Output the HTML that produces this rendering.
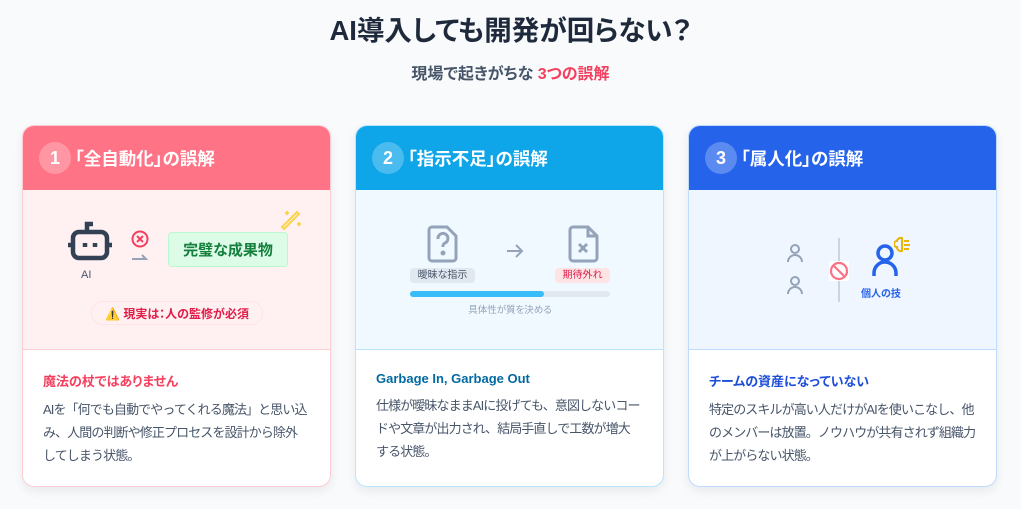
<!DOCTYPE html>
<html><head><meta charset="utf-8"><style>
*{box-sizing:border-box;margin:0;padding:0}
body{width:1021px;height:509px;background:#f8fafc;font-family:"Liberation Sans","Noto Sans CJK JP",sans-serif;position:relative;overflow:hidden;color:#1e293b;font-feature-settings:"palt"}
h1{position:absolute;top:8px;left:0;width:1021px;text-align:center;font-size:27.5px;font-weight:700;color:#1e293b}
.sub{position:absolute;top:60px;left:0;width:1021px;text-align:center;font-size:16px;font-weight:700;color:#475569}
.sub span{color:#f43f5e}
.card{position:absolute;top:125px;width:309px;height:362px;border-radius:12px;background:#fff;overflow:hidden;box-shadow:0 4px 10px rgba(15,23,42,.07)}
.hd{height:64px;display:flex;align-items:center;padding-left:16px;color:#fff;font-size:17.5px;font-weight:700}
.num{width:32px;height:32px;border-radius:50%;background:rgba(255,255,255,.25);display:flex;align-items:center;justify-content:center;font-size:18px;margin-right:4px}
.il{height:160px;position:relative}
.bt{padding:21px 0 0 20px}
.bt h3{font-size:13px;font-weight:700;margin-bottom:8px}
.bt p{font-size:13px;line-height:23px;color:#475569;white-space:nowrap;letter-spacing:-0.9px;font-feature-settings:normal}
.abs{position:absolute}
</style></head><body>
<h1>AI導入しても開発が回らない？</h1>
<div class="sub">現場で起きがちな <span>3つの誤解</span></div>

<div class="card" style="left:22px;border:1px solid #fecdd3">
<div class="hd" style="background:#ff7386"><div class="num">1</div>「全自動化」の誤解</div>
<div class="il" style="background:#fff1f2;border-bottom:1px solid #fecdd3">
<svg class="abs" style="left:42px;top:28px" width="50" height="50" viewBox="0 0 50 50" fill="none" stroke="#334155" stroke-width="4.5"><path d="M22 14V6h6"/><rect x="8" y="14" width="34" height="26" rx="6"/><path d="M3 27h5M42 27h5"/><path d="M20 25v4M30 25v4"/></svg>
<div class="abs" style="left:58px;top:79px;font-size:11px;color:#475569">AI</div>
<svg class="abs" style="left:106px;top:40px" width="22" height="36" viewBox="0 0 22 36" fill="none"><circle cx="11" cy="9" r="7.5" stroke="#f43f5e" stroke-width="2"/><path d="M8 6l6 6M14 6l-6 6" stroke="#f43f5e" stroke-width="2"/><path d="M3 29h14l-4-4" stroke="#94a3b8" stroke-width="2"/></svg>
<div class="abs" style="left:145px;top:42px;width:120px;height:35px;background:#dcfce7;border:1px solid #bbf7d0;border-radius:4px;color:#15803d;font-size:15px;font-weight:700;display:flex;align-items:center;justify-content:center">完璧な成果物</div>
<svg class="abs" style="left:257px;top:18px" width="24" height="24" viewBox="0 0 24 24" fill="none" stroke="#fcd34d" stroke-width="2"><path d="M4 21L19 6l-2-2L2 19z"/><path d="M7 3v4M5 5h4M19 14v4M17 16h4"/></svg>
<div class="abs" style="left:68px;top:111px;width:172px;height:24px;border:1px solid #ffe4e6;border-radius:12px;background:#fff1f2;font-size:12px;color:#e11d48;font-weight:700;display:flex;align-items:center;justify-content:center">⚠️ 現実は：人の監修が必須</div>
</div>
<div class="bt"><h3 style="color:#f43f5e">魔法の杖ではありません</h3><p>AIを「何でも自動でやってくれる魔法」と思い込<br>み、人間の判断や修正プロセスを設計から除外<br>してしまう状態。</p></div>
</div>

<div class="card" style="left:355px;border:1px solid #bae6fd">
<div class="hd" style="background:#0ea5e9"><div class="num">2</div>「指示不足」の誤解</div>
<div class="il" style="background:#f0f9ff;border-bottom:1px solid #bae6fd">
<svg class="abs" style="left:70px;top:34px" width="34" height="40" viewBox="0 0 34 40" fill="none" stroke="#94a3b8" stroke-width="3"><path d="M6 3h15l9 9v22a3 3 0 0 1-3 3H6a3 3 0 0 1-3-3V6a3 3 0 0 1 3-3z"/><path d="M12 15a5 5 0 1 1 7 4c-2 1-2 2-2 4"/><circle cx="17" cy="29" r="1" fill="#94a3b8"/></svg>
<svg class="abs" style="left:150px;top:53px" width="18" height="16" viewBox="0 0 18 16" fill="none" stroke="#94a3b8" stroke-width="2"><path d="M1 8h15M10 2l6 6-6 6"/></svg>
<svg class="abs" style="left:211px;top:34px" width="34" height="40" viewBox="0 0 34 40" fill="none" stroke="#94a3b8" stroke-width="3"><path d="M6 3h15l9 9v22a3 3 0 0 1-3 3H6a3 3 0 0 1-3-3V6a3 3 0 0 1 3-3z"/><path d="M21 3v9h9"/><path d="M12 20l8 8M20 20l-8 8"/></svg>
<div class="abs" style="left:54px;top:78px;width:65px;height:15px;background:#e2e8f0;border-radius:4px;font-size:10px;color:#475569;text-align:center;line-height:15px">曖昧な指示</div>
<div class="abs" style="left:199px;top:78px;width:55px;height:15px;background:#ffe4e6;border-radius:4px;font-size:10px;color:#e11d48;text-align:center;line-height:15px">期待外れ</div>
<div class="abs" style="left:54px;top:101px;width:200px;height:6px;background:#e2e8f0;border-radius:3px"><div style="width:134px;height:6px;background:#38bdf8;border-radius:3px"></div></div>
<div class="abs" style="left:54px;top:112px;width:200px;text-align:center;font-size:9.5px;color:#94a3b8">具体性が質を決める</div>
</div>
<div class="bt"><h3 style="color:#0369a1">Garbage In, Garbage Out</h3><p>仕様が曖昧なままAIに投げても、意図しないコー<br>ドや文章が出力され、結局手直しで工数が増大<br>する状態。</p></div>
</div>

<div class="card" style="left:688px;border:1px solid #bfdbfe">
<div class="hd" style="background:#2563eb"><div class="num">3</div>「属人化」の誤解</div>
<div class="il" style="background:#eff6ff;border-bottom:1px solid #bfdbfe">
<svg class="abs" style="left:97px;top:54px" width="18" height="56" viewBox="0 0 18 56" fill="none" stroke="#94a3b8" stroke-width="2"><circle cx="9" cy="5" r="4"/><path d="M2 18a7 7 0 0 1 14 0"/><circle cx="9" cy="37" r="4"/><path d="M2 50a7 7 0 0 1 14 0"/></svg>
<div class="abs" style="left:149px;top:48px;width:2px;height:64px;background:#cbd5e1"></div>
<svg class="abs" style="left:140px;top:71px" width="20" height="20" viewBox="0 0 20 20" fill="none" stroke="#fb7185" stroke-width="2.2"><rect width="20" height="20" fill="#fff" stroke="none"/><circle cx="10" cy="10" r="8"/><path d="M4.5 4.5l11 11"/></svg>
<svg class="abs" style="left:182px;top:53px" width="28" height="34" viewBox="0 0 28 34" fill="none" stroke="#2563eb" stroke-width="3.5"><circle cx="14" cy="10" r="7"/><path d="M3 33v-3a11 11 0 0 1 22 0v3"/></svg>
<svg class="abs" style="left:205px;top:46px" width="18" height="18" viewBox="0 0 18 18" fill="none" stroke="#eab308" stroke-width="2"><path d="M8 2a4 4 0 0 0-5 3 3 3 0 0 0 0 6 4 4 0 0 0 5 4V2z"/><path d="M10 5h5M10 9h6M10 13h5"/></svg>
<div class="abs" style="left:172px;top:95px;font-size:10px;font-weight:700;color:#2563eb">個人の技</div>
</div>
<div class="bt"><h3 style="color:#1d4ed8">チームの資産になっていない</h3><p>特定のスキルが高い人だけがAIを使いこなし、他<br>のメンバーは放置。ノウハウが共有されず組織力<br>が上がらない状態。</p></div>
</div>
</body></html>
